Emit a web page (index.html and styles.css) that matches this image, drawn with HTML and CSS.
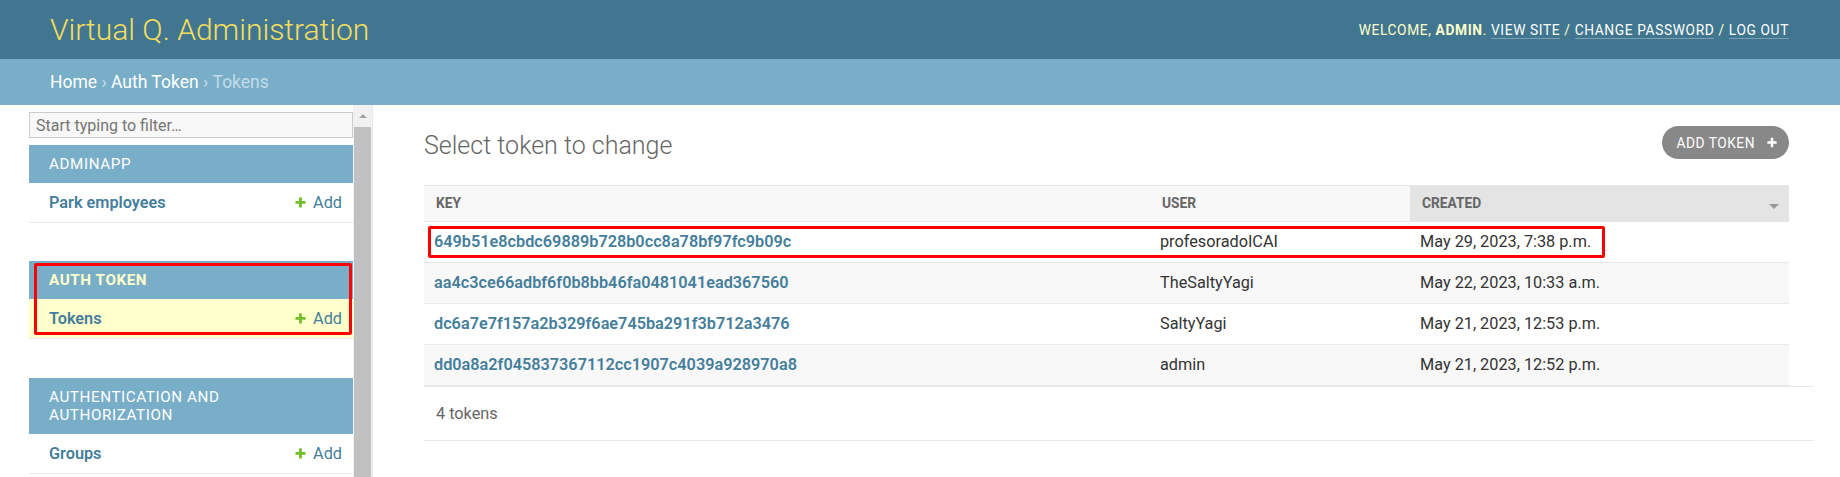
FILE: index.html
```html
<!DOCTYPE html>
<html lang="en">
<head>
<meta charset="utf-8">
<title>Select token to change | Virtual Q. Administration</title>
<link rel="stylesheet" href="styles.css">
</head>
<body>
<header class="header">
  <div class="branding">Virtual Q. Administration</div>
  <div class="user-tools">Welcome, <strong>admin</strong>. <a href="#">View site</a> / <a href="#">Change password</a> / <a href="#">Log out</a></div>
</header>
<nav class="breadcrumbs"><a href="#">Home</a>&nbsp;›&nbsp;<a href="#">Auth Token</a>&nbsp;›&nbsp;<span>Tokens</span></nav>
<div class="main">
  <div class="toggle"></div>
  <aside class="sidebar">
    <div class="nav">
      <input class="nav-filter" type="search" placeholder="Start typing to filter…">
      <div class="module">
        <div class="caption">Adminapp</div>
        <div class="model-row"><a class="model" href="#">Park employees</a><a class="addlink" href="#"><svg viewBox="0 0 1792 1792"><path fill="#70bf2b" d="M1600 796v192q0 40-28 68t-68 28h-416v416q0 40-28 68t-68 28h-192q-40 0-68-28t-28-68v-416h-416q-40 0-68-28t-28-68v-192q0-40 28-68t68-28h416v-416q0-40 28-68t68-28h192q40 0 68 28t28 68v416h416q40 0 68 28t28 68z"/></svg>Add</a></div>
      </div>
      <div class="module current-app">
        <div class="caption">Auth Token</div>
        <div class="model-row current"><a class="model" href="#">Tokens</a><a class="addlink" href="#"><svg viewBox="0 0 1792 1792"><path fill="#70bf2b" d="M1600 796v192q0 40-28 68t-68 28h-416v416q0 40-28 68t-68 28h-192q-40 0-68-28t-28-68v-416h-416q-40 0-68-28t-28-68v-192q0-40 28-68t68-28h416v-416q0-40 28-68t68-28h192q40 0 68 28t28 68v416h416q40 0 68 28t28 68z"/></svg>Add</a></div>
        <div class="annot annot-side"></div>
      </div>
      <div class="module">
        <div class="caption">Authentication and Authorization</div>
        <div class="model-row"><a class="model" href="#">Groups</a><a class="addlink" href="#"><svg viewBox="0 0 1792 1792"><path fill="#70bf2b" d="M1600 796v192q0 40-28 68t-68 28h-416v416q0 40-28 68t-68 28h-192q-40 0-68-28t-28-68v-416h-416q-40 0-68-28t-28-68v-192q0-40 28-68t68-28h416v-416q0-40 28-68t68-28h192q40 0 68 28t28 68v416h416q40 0 68 28t28 68z"/></svg>Add</a></div>
      </div>
    </div>
    <div class="scrollbar"><div class="sb-arrow"></div><div class="sb-thumb"></div></div>
  </aside>
  <main class="content">
    <div class="toolbar">
      <h1 class="title">Select token to change</h1>
      <a class="add-btn" href="#">Add token <svg viewBox="0 0 1792 1792"><path fill="#fff" d="M1600 736v192q0 40-28 68t-68 28h-416v416q0 40-28 68t-68 28h-192q-40 0-68-28t-28-68v-416h-416q-40 0-68-28t-28-68v-192q0-40 28-68t68-28h416v-416q0-40 28-68t68-28h192q40 0 68 28t28 68v416h416q40 0 68 28t28 68z"/></svg></a>
    </div>
    <div class="results-wrap">
      <table class="results">
        <colgroup><col class="c-key"><col class="c-user"><col class="c-created"></colgroup>
        <thead>
          <tr><th class="col">Key</th><th class="col">User</th><th class="col sorted"><div class="th-inner"><span>Created</span><span class="sort-arrow"></span></div></th></tr>
        </thead>
        <tbody>
          <tr><th class="key"><a href="#">649b51e8cbdc69889b728b0cc8a78bf97fc9b09c</a></th><td>profesoradoICAI</td><td>May 29, 2023, 7:38 p.m.</td></tr>
          <tr><th class="key"><a href="#">aa4c3ce66adbf6f0b8bb46fa0481041ead367560</a></th><td>TheSaltyYagi</td><td>May 22, 2023, 10:33 a.m.</td></tr>
          <tr><th class="key"><a href="#">dc6a7e7f157a2b329f6ae745ba291f3b712a3476</a></th><td>SaltyYagi</td><td>May 21, 2023, 12:53 p.m.</td></tr>
          <tr><th class="key"><a href="#">dd0a8a2f045837367112cc1907c4039a928970a8</a></th><td>admin</td><td>May 21, 2023, 12:52 p.m.</td></tr>
        </tbody>
      </table>
      <div class="annot annot-row"></div>
    </div>
    <p class="paginator">4 tokens</p>
  </main>
</div>
</body>
</html>
```
FILE: styles.css
```css
* { box-sizing: border-box; }
html, body { margin: 0; padding: 0; }
body {
  font-family: Roboto, "Liberation Sans", sans-serif;
  color: #333;
  background: #fff;
  width: 1840px;
  height: 477px;
  overflow: hidden;
}
a { text-decoration: none; color: #447e9b; }

/* header */
.header {
  height: 59px;
  background: #417690;
  padding: 0 51px 0 50px;
  display: flex;
  align-items: center;
  justify-content: space-between;
}
.branding {
  font-size: 30px;
  font-weight: 300;
  color: #f5dd5d;
  line-height: 36px;
}
.user-tools {
  font-size: 13.75px;
  letter-spacing: 0.625px;
  text-transform: uppercase;
  color: #ffc;
  line-height: 18px;
}
.user-tools strong { font-weight: 700; }
.user-tools a {
  color: #fff;
  border-bottom: 1px solid rgba(255, 255, 255, 0.3);
}

/* breadcrumbs */
.breadcrumbs {
  height: 46px;
  background: #79aec8;
  padding: 0 50px;
  display: flex;
  align-items: center;
  font-size: 17.5px;
  color: #c4dce8;
}
.breadcrumbs a { color: #fff; }

/* layout */
.main {
  display: flex;
  height: 372px;
  overflow: hidden;
}
.toggle { flex: 0 0 29px; }
.sidebar {
  flex: 0 0 344px;
  display: flex;
  border-right: 1px solid #e8e8e8;
}
.nav {
  width: 324px;
  padding-top: 7px;
}
.nav-filter {
  display: block;
  width: 100%;
  height: 26px;
  margin: 0 0 7px;
  border: 1px solid #ccc;
  background: #f8f8f8;
  padding: 0 6px;
  font-family: Roboto, "Liberation Sans", sans-serif;
  font-size: 16px;
  color: #333;
  outline: none;
}
.nav-filter::placeholder { color: #757575; }

.module {
  position: relative;
  margin-bottom: 38px;
}
.module.current-app { margin-bottom: 39px; }
.caption {
  background: #79aec8;
  color: #fff;
  font-size: 15.2px;
  letter-spacing: 0.6px;
  text-transform: uppercase;
  padding: 10px 30px 10px 20px;
  line-height: 18px;
}
.current-app .caption { color: #ffc; font-weight: 700; }
.model-row {
  display: flex;
  justify-content: space-between;
  align-items: center;
  height: 40px;
  border-bottom: 1px solid #e8e8e8;
  padding: 0 11px 0 20px;
  font-size: 16.25px;
}
.model-row.current { background: #ffc; }
.model { font-weight: 600; }
.addlink {
  display: flex;
  align-items: center;
  gap: 6px;
}
.addlink svg { width: 13px; height: 13px; }

.scrollbar {
  width: 19px;
  background: #f1f1f1;
  display: flex;
  flex-direction: column;
  align-items: center;
}
.sb-arrow {
  margin-top: 9px;
  width: 0;
  height: 0;
  border-left: 4px solid transparent;
  border-right: 4px solid transparent;
  border-bottom: 4px solid #a3a3a3;
}
.sb-thumb {
  margin-top: 9px;
  width: 17px;
  flex: 1;
  background: #c1c1c1;
}

/* content */
.content {
  flex: 1;
  min-width: 0;
  padding: 21px 51px 0 51px;
}
.toolbar {
  display: flex;
  justify-content: space-between;
  align-items: flex-start;
  height: 59px;
}
.title {
  margin: 5px 0 0;
  font-size: 25px;
  font-weight: 300;
  color: #666;
  line-height: 30px;
}
.add-btn {
  display: flex;
  align-items: center;
  height: 33px;
  padding: 0 11px 0 15px;
  gap: 11px;
  background: #888;
  border-radius: 17px;
  color: #fff;
  font-size: 13.75px;
  letter-spacing: 0.5px;
  text-transform: uppercase;
}
.add-btn svg { width: 12px; height: 12px; }

.results-wrap { position: relative; }
.results {
  width: 100%;
  border-collapse: separate;
  border-spacing: 0;
  table-layout: fixed;
}
.c-key { width: 726px; }
.c-user { width: 260px; }
.c-created { width: 379px; }
.results th.col {
  background: #f8f8f8;
  border-top: 1px solid #e8e8e8;
  border-bottom: 1px solid #e8e8e8;
  text-align: left;
  padding: 0 12px;
  line-height: 35px;
  font-size: 13.75px;
  font-weight: 700;
  color: #666;
  text-transform: uppercase;
}
.results th.sorted { background: #e4e4e4; padding-right: 10px; }
.th-inner {
  display: flex;
  justify-content: space-between;
  align-items: center;
}
.sort-arrow {
  width: 0;
  height: 0;
  border-left: 5px solid transparent;
  border-right: 5px solid transparent;
  border-top: 5px solid #999;
  margin-top: 6px;
}
.results tbody th,
.results tbody td {
  padding: 10px;
  line-height: 20px;
  font-size: 16.25px;
  border-bottom: 1px solid #e8e8e8;
  text-align: left;
  white-space: nowrap;
}
.results tbody td { color: #333; font-weight: 400; }
.results tbody th { font-weight: 600; }
.results tbody tr:nth-child(even) { background: #f8f8f8; }

.annot {
  position: absolute;
  border: 3px solid #f00;
  border-radius: 2px;
  pointer-events: none;
}
.annot-side { left: 5px; top: 2px; width: 318px; height: 72px; }
.annot-row { left: 4px; top: 41px; width: 1177px; height: 32px; }

.paginator {
  margin: 0 -24px 0 0;
  border-top: 1px solid #e8e8e8;
  border-bottom: 1px solid #e8e8e8;
  padding: 12.5px 12px;
  line-height: 28px;
  font-size: 16.25px;
  color: #666;
}
```
